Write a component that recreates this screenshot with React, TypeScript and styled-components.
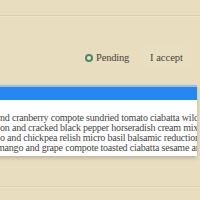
import React from 'react';
import styled, { createGlobalStyle } from 'styled-components';

const GlobalStyle = createGlobalStyle`
  html,
  body {
    margin: 0;
    padding: 0;
    background: #e8ddbf;
    overflow: hidden;
  }
`;

const Page = styled.div`
  width: 200px;
  height: 200px;
  display: flex;
  flex-direction: column;
  font-family: 'Liberation Serif', 'DejaVu Serif', serif;
  color: #46453f;
  overflow: hidden;
`;

const Rule = styled.div<{ $gap: number }>`
  margin-top: ${(p) => p.$gap}px;
  height: 1px;
  background: #dccfae;
  border-bottom: 1px solid #eee4c9;
`;

const Toolbar = styled.div`
  height: 68px;
  box-sizing: border-box;
  padding: 13px 9px 0 0;
  display: flex;
  align-items: center;
  justify-content: flex-end;
  gap: 13px;
`;

const Status = styled.span`
  display: flex;
  align-items: center;
  gap: 3px;
  font-size: 10.5px;
  letter-spacing: -0.2px;
`;

const Dot = styled.span`
  width: 8px;
  height: 8px;
  box-sizing: border-box;
  border-radius: 50%;
  border: 2.5px solid #4f8a5c;
  background: #d9ecd9;
`;

const AcceptButton = styled.button`
  font: inherit;
  font-size: 10.5px;
  color: #46453f;
  background: rgba(255, 255, 255, 0.04);
  border: none;
  padding: 6px 8px;
  cursor: pointer;
`;

const Card = styled.div`
  margin-left: -20px;
  width: 217px;
  box-shadow: 0 2px 4px rgba(0, 0, 0, 0.2);
`;

const CardBar = styled.div`
  height: 13px;
  background: #2588f2;
  border-top: 2px solid #9dbfe2;
`;

const CardBody = styled.div`
  background: #ffffff;
  padding: 13px 0 3px 20px;
  overflow: hidden;
`;

const Line = styled.div<{ $shift?: number }>`
  white-space: nowrap;
  font-size: 10px;
  line-height: 10px;
  letter-spacing: -0.2px;
  margin-left: ${(p) => p.$shift ?? 0}px;
`;

const lines = [
  { text: 'nd cranberry compote sundried tomato ciabatta wild mushroom' },
  { text: 'on and cracked black pepper horseradish cream mixed leaves' },
  { text: 'o and chickpea relish micro basil balsamic reduction Vine' },
  { text: 'mango and grape compote toasted ciabatta sesame and honey', shift: -3 },
];

function App(): JSX.Element {
  return (
    <>
      <GlobalStyle />
      <Page>
        <Rule $gap={15} />
        <Toolbar>
          <Status>
            <Dot />
            Pending
          </Status>
          <AcceptButton type='button'>I accept</AcceptButton>
        </Toolbar>
        <Card>
          <CardBar />
          <CardBody>
            {lines.map((l) => (
              <Line key={l.text} $shift={l.shift}>
                {l.text}
              </Line>
            ))}
          </CardBody>
        </Card>
        <Rule $gap={30} />
      </Page>
    </>
  );
}

export default App;
